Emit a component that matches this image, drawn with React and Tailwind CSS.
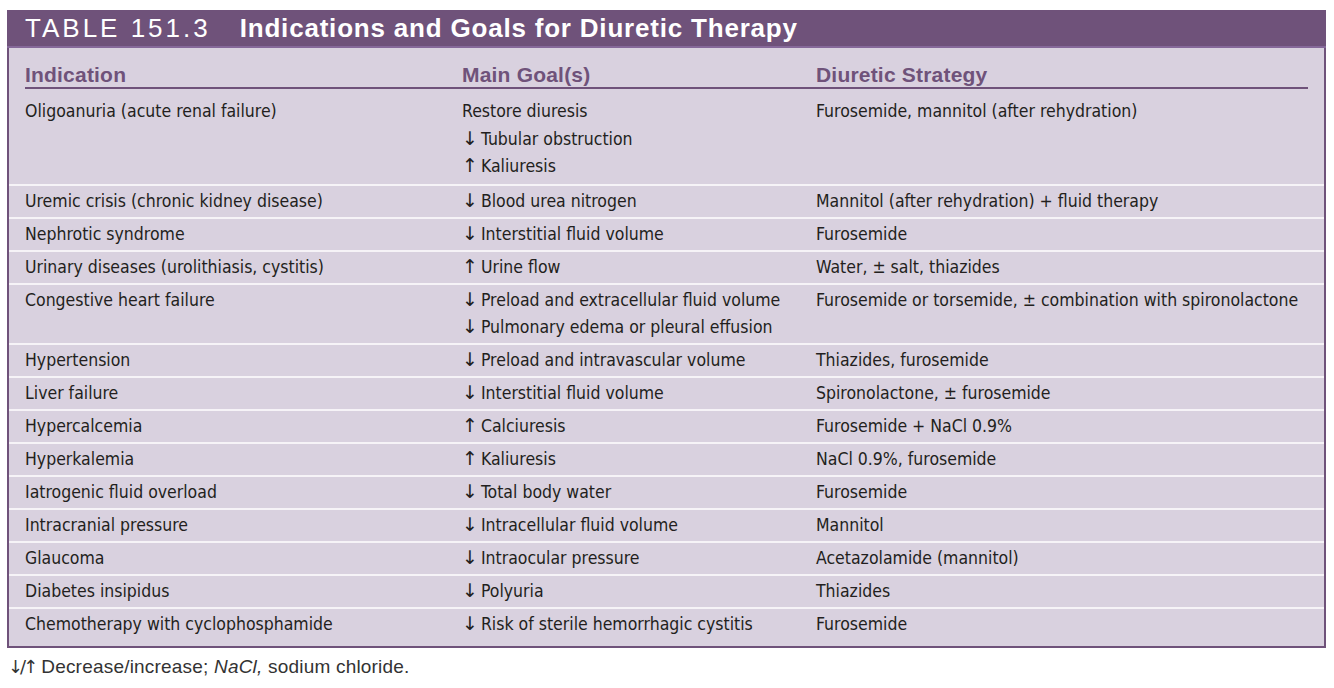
import React from "react";

const rows = [
  ["Oligoanuria (acute renal failure)", [["", "Restore diuresis"], ["↓", "Tubular obstruction"], ["↑", "Kaliuresis"]], "Furosemide, mannitol (after rehydration)"],
  ["Uremic crisis (chronic kidney disease)", [["↓", "Blood urea nitrogen"]], "Mannitol (after rehydration) + fluid therapy"],
  ["Nephrotic syndrome", [["↓", "Interstitial fluid volume"]], "Furosemide"],
  ["Urinary diseases (urolithiasis, cystitis)", [["↑", "Urine flow"]], "Water, ± salt, thiazides"],
  ["Congestive heart failure", [["↓", "Preload and extracellular fluid volume"], ["↓", "Pulmonary edema or pleural effusion"]], "Furosemide or torsemide, ± combination with spironolactone"],
  ["Hypertension", [["↓", "Preload and intravascular volume"]], "Thiazides, furosemide"],
  ["Liver failure", [["↓", "Interstitial fluid volume"]], "Spironolactone, ± furosemide"],
  ["Hypercalcemia", [["↑", "Calciuresis"]], "Furosemide + NaCl 0.9%"],
  ["Hyperkalemia", [["↑", "Kaliuresis"]], "NaCl 0.9%, furosemide"],
  ["Iatrogenic fluid overload", [["↓", "Total body water"]], "Furosemide"],
  ["Intracranial pressure", [["↓", "Intracellular fluid volume"]], "Mannitol"],
  ["Glaucoma", [["↓", "Intraocular pressure"]], "Acetazolamide (mannitol)"],
  ["Diabetes insipidus", [["↓", "Polyuria"]], "Thiazides"],
  ["Chemotherapy with cyclophosphamide", [["↓", "Risk of sterile hemorrhagic cystitis"]], "Furosemide"],
];

const narrow = { fontFamily: '"Liberation Sans Narrow", "DejaVu Sans Condensed", "Liberation Sans", sans-serif' };
const arrowFont = { fontFamily: '"DejaVu Sans", sans-serif' };

export default function App() {
  return (
    <div className="w-[1334px] h-[688px] bg-white pt-[10px]" style={{ fontFamily: '"Liberation Sans", Arial, sans-serif' }}>
      <div className="ml-[7px] w-[1319px]">
        <div className="h-[38px] bg-[#6f527a] border-b-2 border-[#86699a] flex items-center pl-[18px] text-white leading-none">
          <span className="text-[26px] tracking-[3px]">TABLE 151.3</span>
          <span className="ml-[29px] text-[26px] font-bold tracking-[0.8px]">Indications and Goals for Diuretic Therapy</span>
        </div>
        <div className="bg-[#d9d1df] border-x-2 border-b-2 border-[#6f527a] text-[#231f20] text-[17.5px] pb-[6px]" style={narrow}>
          <div className="mx-[16px] w-[1283px] h-[41px] pt-[16px] border-b-2 border-[#6f527a] grid grid-cols-[437px_354px_1fr] text-[21px] font-bold text-[#6f527a] leading-[21px] tracking-[0.2px]" style={{ fontFamily: '"Liberation Sans", Arial, sans-serif' }}>
            <div>Indication</div>
            <div>Main Goal(s)</div>
            <div>Diuretic Strategy</div>
          </div>
          <div className="pt-[7px]">
            {rows.map((r, i) => (
              <div key={i} className={`grid grid-cols-[453px_354px_1fr] leading-[27px] pt-[2px] ${i === 0 ? "pb-[3px]" : "pb-[2px] border-t-2 border-[#f6f3f7]"}`}>
                <div className="pl-[16px]">{r[0]}</div>
                <div>
                  {r[1].map((l, j) => (
                    <div key={j} className={i === 0 ? "h-[27.5px]" : "h-[27px]"}>
                      {l[0] && (
                        <span className="text-[19px] leading-[10px] mr-[3px]" style={arrowFont}>{l[0]}</span>
                      )}
                      {l[1]}
                    </div>
                  ))}
                </div>
                <div>{r[2]}</div>
              </div>
            ))}
          </div>
        </div>
      </div>
      <div className="mt-[8px] ml-[8px] text-[19px] leading-[21px] text-[#333] tracking-[0.2px]">
        <span style={arrowFont} className="text-[18px] leading-[10px] tracking-[-3px] mr-[6px]">↓/↑</span>Decrease/increase; <i>NaCl,</i> sodium chloride.
      </div>
    </div>
  );
}
